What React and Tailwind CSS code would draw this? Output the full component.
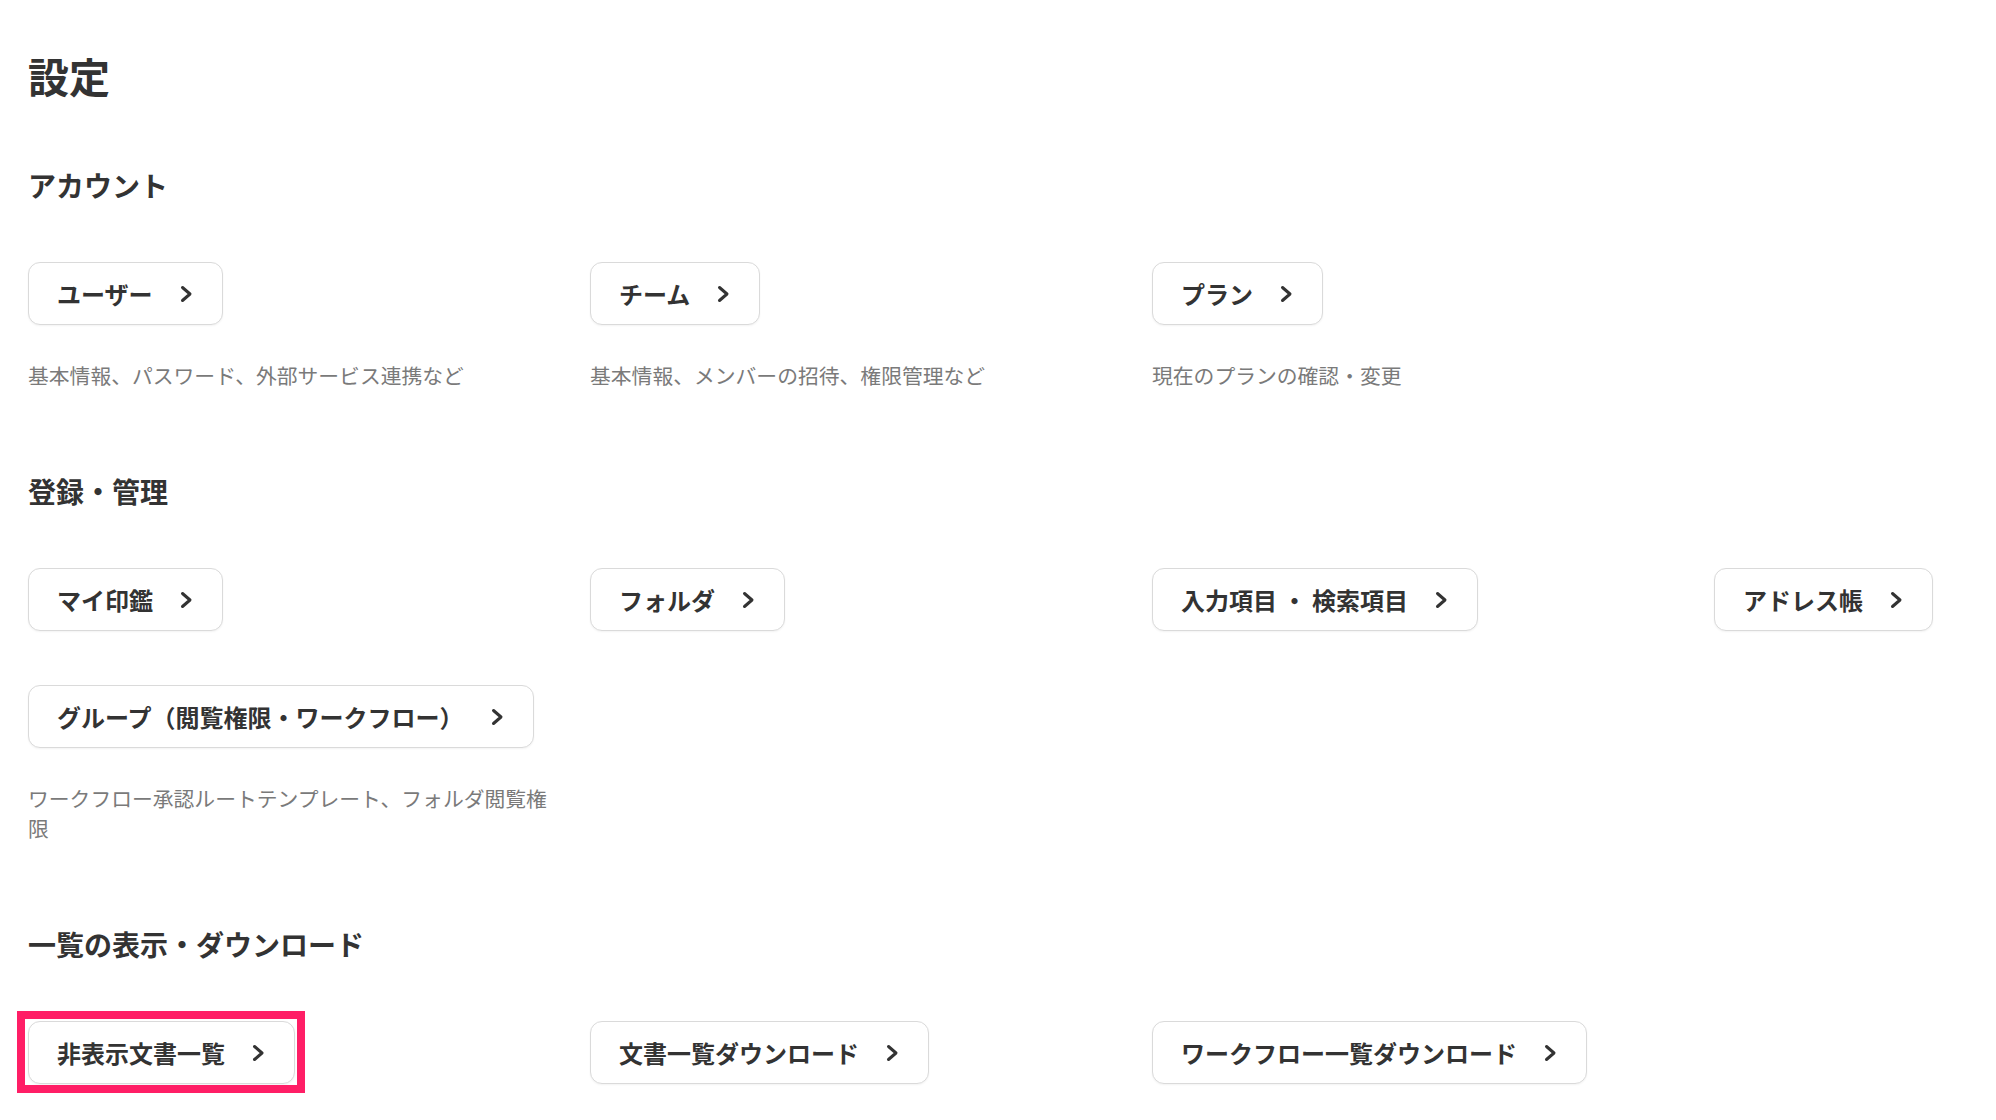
import React from "react";

const FONT = { fontFamily: '"Noto Sans CJK JP", "Noto Sans", sans-serif' };

function Chevron() {
  return (
    <svg width="13" height="18" viewBox="0 0 13 18" fill="none" className="ml-[27px] shrink-0">
      <polyline points="2.5,2.5 10,9 2.5,15.5" stroke="#333333" strokeWidth="3" strokeLinecap="round" strokeLinejoin="round" />
    </svg>
  );
}

function Item({ label, desc, highlight }) {
  return (
    <div className="flex flex-col items-start">
      <div className="relative">
        <button className="flex h-[63px] items-center rounded-[12px] border border-[#dadada] bg-white pl-[28px] pr-[29px] shadow-[0_1px_2px_rgba(0,0,0,0.05)]">
          <span className="whitespace-pre text-[24px] font-bold leading-none text-[#333333]">{label}</span>
          <Chevron />
        </button>
        {highlight && (
          <div className="pointer-events-none absolute -top-[10px] -bottom-[9px] -left-[11px] -right-[10px] border-[8px] border-[#ff1e66]" />
        )}
      </div>
      {desc && (
        <p className="mt-[35px] text-[20.8px] leading-[30px] text-[#7a7a7a]">{desc}</p>
      )}
    </div>
  );
}

function Section({ title, first, children }) {
  return (
    <section className={first ? "mt-[59px]" : "mt-[81px]"}>
      <h2 className="text-[28px] font-bold leading-[40px] text-[#333333]">{title}</h2>
      <div className="mt-[57px] grid grid-cols-[531px_531px_531px_1fr] gap-x-[31px] gap-y-[54px]">
        {children}
      </div>
    </section>
  );
}

export default function App() {
  return (
    <div style={FONT} className="min-h-screen overflow-hidden bg-white pl-[28px] pt-[44px] pb-[40px]">
      <h1 className="text-[41px] font-bold leading-[62px] text-[#333333]">設定</h1>

      <Section title="アカウント" first>
        <Item label="ユーザー" desc="基本情報、パスワード、外部サービス連携など" />
        <Item label="チーム" desc="基本情報、メンバーの招待、権限管理など" />
        <Item label="プラン" desc="現在のプランの確認・変更" />
      </Section>

      <Section title="登録・管理">
        <Item label="マイ印鑑" />
        <Item label="フォルダ" />
        <Item label="入力項目 ・ 検索項目" />
        <Item label="アドレス帳" />
        <Item label="グループ（閲覧権限・ワークフロー）" desc="ワークフロー承認ルートテンプレート、フォルダ閲覧権限" />
      </Section>

      <Section title="一覧の表示・ダウンロード">
        <Item label="非表示文書一覧" highlight />
        <Item label="文書一覧ダウンロード" />
        <Item label="ワークフロー一覧ダウンロード" />
      </Section>
    </div>
  );
}
